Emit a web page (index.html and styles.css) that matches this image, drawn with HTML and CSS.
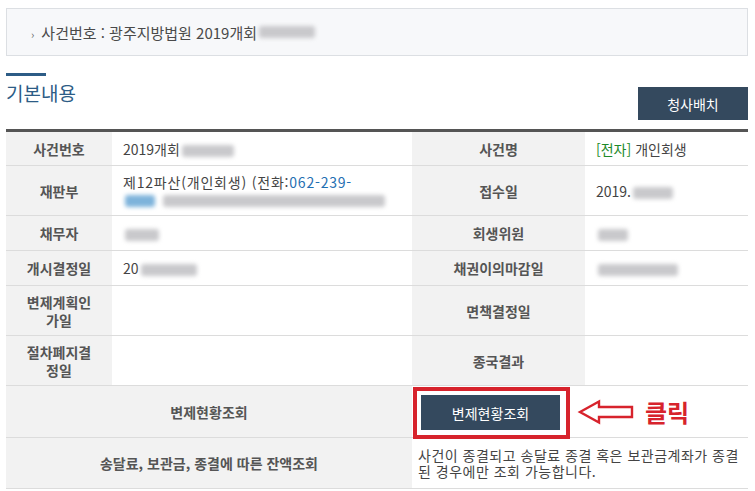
FILE: index.html
```html
<!DOCTYPE html>
<html lang="ko">
<head>
    <meta charset="UTF-8">
    <meta name="viewport" content="width=device-width, initial-scale=1.0">
    <title>사건검색 - 기본내용</title>
    <link rel="stylesheet" href="styles.css">
</head>
<body>
    <div class="page">
        <div class="case-box">
            <span class="bullet">›</span>사건번호 : 광주지방법원 2019개회<span class="blur" style="width:56px"></span>
        </div>

        <div class="section-head">
            <div class="title-wrap">
                <div class="accent"></div>
                <h2>기본내용</h2>
            </div>
            <button class="btn-dark btn-court">청사배치</button>
        </div>

        <table class="info">
            <colgroup>
                <col style="width:106px">
                <col style="width:300px">
                <col style="width:173px">
                <col style="width:163px">
            </colgroup>
            <tr>
                <th>사건번호</th>
                <td>2019개회<span class="blur" style="width:52px"></span></td>
                <th>사건명</th>
                <td><span class="green">[전자]</span> 개인회생</td>
            </tr>
            <tr>
                <th>재판부</th>
                <td class="wide">제12파산(개인회생) (전화:<span class="blue">062-239-</span><br><span class="blur blur-blue" style="width:30px"></span><span class="blur" style="width:222px"></span></td>
                <th>접수일</th>
                <td>2019.<span class="blur" style="width:40px"></span></td>
            </tr>
            <tr>
                <th>채무자</th>
                <td><span class="blur" style="width:34px"></span></td>
                <th>회생위원</th>
                <td><span class="blur" style="width:30px"></span></td>
            </tr>
            <tr>
                <th>개시결정일</th>
                <td>20<span class="blur" style="width:56px"></span></td>
                <th>채권이의마감일</th>
                <td><span class="blur" style="width:80px"></span></td>
            </tr>
            <tr>
                <th class="two-line">변제계획인<br>가일</th>
                <td></td>
                <th>면책결정일</th>
                <td></td>
            </tr>
            <tr>
                <th class="two-line">절차폐지결<br>정일</th>
                <td></td>
                <th>종국결과</th>
                <td></td>
            </tr>
            <tr>
                <th colspan="2">변제현황조회</th>
                <td colspan="2" class="action-cell">
                    <div class="action">
                        <div class="highlight">
                            <button class="btn-dark btn-pay">변제현황조회</button>
                        </div>
                        <svg class="arrow" width="58" height="26" viewBox="0 0 58 26">
                            <path d="M3 13 L22 2.5 L22 8 L55 8 L55 18 L22 18 L22 23.5 Z" fill="#fff" stroke="#d7232c" stroke-width="2.4"/>
                        </svg>
                        <span class="click">클릭</span>
                    </div>
                </td>
            </tr>
            <tr>
                <th colspan="2">송달료, 보관금, 종결에 따른 잔액조회</th>
                <td colspan="2" class="note">사건이 종결되고 송달료 종결 혹은 보관금계좌가 종결된 경우에만 조회 가능합니다.</td>
            </tr>
        </table>
    </div>
</body>
</html>
```

FILE: styles.css
```css
* {
    margin: 0;
    padding: 0;
    box-sizing: border-box;
}

body {
    font-family: "Noto Sans CJK KR", "Noto Sans", sans-serif;
    font-size: 14px;
    color: #444;
    background: #fff;
}

.page {
    width: 742px;
    margin: 8px 0 0 6px;
}

.case-box {
    height: 48px;
    border: 1px solid #dcdfe3;
    background: #f7f8fa;
    padding: 0 0 0 24px;
    display: flex;
    align-items: center;
    color: #4a4a4a;
    font-size: 15px;
}

.bullet {
    font-size: 11px;
    color: #666;
    margin-right: 7px;
    position: relative;
    top: 2px;
}

.blur {
    display: inline-block;
    height: 12px;
    background: #c9c9cc;
    filter: blur(2.2px);
    vertical-align: middle;
    margin-left: 2px;
    border-radius: 3px;
}

.blur-blue {
    background: #7eb3db;
    margin-right: 6px;
}

.section-head {
    display: flex;
    justify-content: space-between;
    margin-top: 17px;
}

.accent {
    width: 40px;
    height: 3px;
    background: #2d5c86;
}

.title-wrap h2 {
    font-size: 19px;
    font-weight: 400;
    color: #2d5c86;
    margin-top: 4px;
    line-height: 26px;
}

.btn-dark {
    border: none;
    background: #34495e;
    color: #fff;
    font-family: inherit;
    font-size: 14px;
    cursor: pointer;
}

.btn-court {
    width: 110px;
    height: 33px;
    margin-top: 14px;
}

.info {
    width: 742px;
    margin-top: 9px;
    border-collapse: collapse;
    table-layout: fixed;
    border-top: 3px solid #555;
}

.info th,
.info td {
    border-bottom: 1px solid #dcdcdc;
    padding: 8px 11px 7px;
    line-height: 17px;
    height: 35px;
    vertical-align: middle;
}

.info th {
    background: #f2f2f2;
    color: #555;
    font-weight: 700;
    text-align: center;
    padding: 8px 6px 7px;
}

.info th.two-line {
    line-height: 18px;
    padding: 7px 6px 6px;
}

.info td {
    color: #444;
    text-align: left;
}

.info td.wide {
    letter-spacing: 0.8px;
}

.green {
    color: #1d8a2a;
}

.blue {
    color: #1f6fb2;
}

.info td.action-cell {
    padding: 0 0 0 1px;
    height: 50px;
}

.action {
    display: flex;
    align-items: center;
}

.highlight {
    border: 4px solid #d7232c;
    padding: 4px 6px 5px 4px;
    margin-top: 1px;
    margin-bottom: -2px;
}

.btn-pay {
    width: 139px;
    height: 35px;
}

.arrow {
    margin-left: 7px;
}

.click {
    color: #d7232c;
    font-size: 24px;
    font-weight: 700;
    margin-left: 10px;
    line-height: 26px;
}

.info td.note {
    padding: 8px 6px;
    font-size: 14px;
    line-height: 16px;
    letter-spacing: 0.5px;
    height: 51px;
}
```
